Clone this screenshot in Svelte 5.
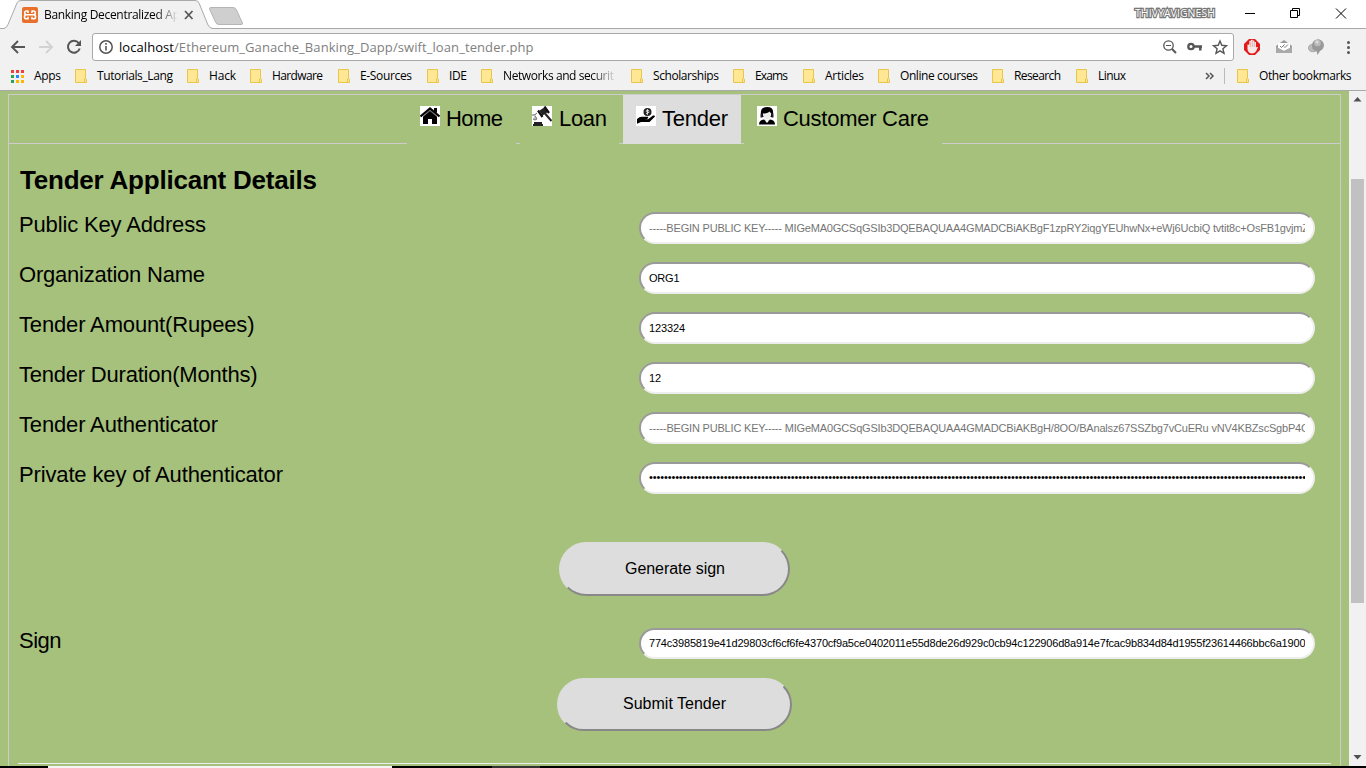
<script>
  const bookmarks = [
    { t: 'Tutorials_Lang', x: 75, tx: 97, w: 76 },
    { t: 'Hack', x: 187, tx: 209, w: 27 },
    { t: 'Hardware', x: 250, tx: 272, w: 51 },
    { t: 'E-Sources', x: 338, tx: 360, w: 52 },
    { t: 'IDE', x: 427, tx: 449, w: 18 },
    { t: 'Networks and securit', x: 481, tx: 503, w: 111, fade: true },
    { t: 'Scholarships', x: 631, tx: 653, w: 66 },
    { t: 'Exams', x: 733, tx: 755, w: 33 },
    { t: 'Articles', x: 803, tx: 825, w: 39 },
    { t: 'Online courses', x: 878, tx: 900, w: 78 },
    { t: 'Research', x: 992, tx: 1014, w: 47 },
    { t: 'Linux', x: 1076, tx: 1098, w: 28 }
  ];
  // each item's left margin is the space left after the previous label
  const items = bookmarks.map((b, i) => ({
    ...b,
    before: b.x - (i ? bookmarks[i - 1].tx + bookmarks[i - 1].w : 61),
    inner: b.tx - b.x - 12
  }));
  const tabs = [
    { t: 'Home', icon: 'home', w: 57, box: 109 },
    { t: 'Loan', icon: 'loan', w: 48, box: 99 },
    { t: 'Tender', icon: 'tender', w: 66, box: 118, on: true },
    { t: 'Customer Care', icon: 'care', w: 146, box: 198 }
  ];
  const rows = [
    { l: 'Public Key Address', w: 187, v: '-----BEGIN PUBLIC KEY----- MIGeMA0GCSqGSIb3DQEBAQUAA4GMADCBiAKBgF1zpRY2iqgYEUhwNx+eWj6UcbiQ tvtit8c+OsFB1gvjmZ', vw: 660, ph: true },
    { l: 'Organization Name', w: 186, v: 'ORG1', vw: 30.5 },
    { l: 'Tender Amount(Rupees)', w: 235.5, v: '123324', vw: 36 },
    { l: 'Tender Duration(Months)', w: 238.5, v: '12', vw: 12 },
    { l: 'Tender Authenticator', w: 199, v: '-----BEGIN PUBLIC KEY----- MIGeMA0GCSqGSIb3DQEBAQUAA4GMADCBiAKBgH/8OO/BAnalsz67SSZbg7vCuERu vNV4KBZscSgbP4C', vw: 660, ph: true },
    { l: 'Private key of Authenticator', w: 264, v: '•'.repeat(176), vw: 657, up: true }
  ];
  const sign = { l: 'Sign', w: 42.5, v: '774c3985819e41d29803cf6cf6fe4370cf9a5ce0402011e55d8de26d929c0cb94c122906d8a914e7fcac9b834d84d1955f23614466bbc6a1900', vw: 656.5, short: true };
</script>

{#snippet fit(t, w, size, h, base, cls)}
  <svg class="fit {cls}" width={w} height={h}><text x="0" y={base} font-size={size} textLength={w} xml:space="preserve">{t}</text></svg>
{/snippet}

{#snippet folder()}
  <svg class="folder" width="12" height="14" viewBox="0 0 12 14"><path d="M.5.5h10v9l1 .8v3.2H.5z" fill="#ffe793" stroke="#e9c54c"/><path d="M9.5 13V9.8h1" fill="none" stroke="#e9c54c"/></svg>
{/snippet}

{#snippet field(r)}
  <div class="row">
    <div class="label">{@render fit(r.l, r.w, 22, 28, 20, '')}</div>
    <div class="input" class:ph={r.ph} class:short={r.short}><div class="clip">{@render fit(r.v, r.vw, 11, 14, r.up ? 10 : 11, '')}</div></div>
  </div>
{/snippet}

<div class="screen">
  <div class="strip">
    <svg width="260" height="29" viewBox="0 0 260 29">
      <path d="M0 28.500h4Q7 28 8.500 24.500L17.500 3Q18.500 .5 21 .5H195Q198 .5 199 3L208 25Q209.500 28.500 213 28.500H260V29H0Z" fill="#f1f1f1"/>
      <path d="M0 28.500h4Q6.500 28 8 24.500L17 3Q18 .5 21 .5H195Q198 .5 199 3L208 25Q209.500 28.500 213 28.500H260" fill="none" stroke="#a9a9a9"/>
      <path d="M211 7.500h22q2.500 0 3.500 2.500l6 13q.5 1.500-1.500 1.500h-22q-2.500 0-3.500-2.500l-6-13q-.3-1.500 1.500-1.500z" fill="#cfcfcf" stroke="#b5b5b5"/>
      <rect x="22" y="7" width="16" height="16" rx="2" fill="#e8702a"/>
      <path d="M28 11h-1.500a1.600 1.600 0 0 0 0 3.700H33.500a1.900 1.900 0 0 1 0 4.100H32v-2M32 11h1.500a1.600 1.600 0 0 1 0 3.700H26.500a1.900 1.900 0 0 0 0 4.100H28v-2M28 10.500v2.500M32 10.500v2.500" fill="none" stroke="#fff" stroke-width="1.600"/>
      <path d="m185 11 7.500 8m0-8-7.500 8" stroke="#555" stroke-width="1.700"/>
    </svg>
    <div class="title">{@render fit('Banking Decentralized Ap', 136, 12, 18, 13, 'ui')}</div>
    <svg class="win" width="250" height="28" viewBox="1116 0 250 28">
      <text x="1135" y="17" font-size="10.500" textLength="80" fill="#fff" stroke="#777" stroke-width="2.400" paint-order="stroke">THIVYAVIGNESH</text>
      <g fill="none" stroke="#000"><path d="M1245 13.500h10M1290.500 10.500h7v7h-7zM1292.500 10V8.500h7v7H1298"/><path d="m1336 8.500 10 10m0-10-10 10"/></g>
    </svg>
  </div>

  <div class="toolbar">
    <svg width="92" height="33" viewBox="0 29 92 33" fill="none">
      <path d="M25 47H12m6-6-6 6 6 6" stroke="#555" stroke-width="1.900"/>
      <path d="M39 47h13m-6-6 6 6-6 6" stroke="#d2d2d2" stroke-width="1.900"/>
      <path d="M78.700 43a6 6 0 1 0 1 5.500" stroke="#555" stroke-width="2"/><path d="M81 40v6h-6z" fill="#555"/>
    </svg>
    <div class="omni">
      <svg width="26" height="26" viewBox="0 0 26 26"><circle cx="13" cy="13" r="6.200" fill="none" stroke="#555" stroke-width="1.500"/><path d="M13 12v4.500M13 9v1.700" stroke="#555" stroke-width="1.600"/></svg>
      {@render fit('localhost', 55, 13, 20, 15, 'ui')}{@render fit('/Ethereum_Ganache_Banking_Dapp/swift_loan_tender.php', 359.5, 13, 20, 15, 'ui gray')}
      <svg class="acts" width="72" height="26" viewBox="1161 34 72 26" fill="none" stroke="#555">
        <circle cx="1168.500" cy="45.500" r="4.700" stroke-width="1.300"/><path d="m1172 49 4 4" stroke-width="2"/><path d="M1166 45.500h5"/>
        <circle cx="1191" cy="46.500" r="2.700" stroke-width="2.300"/><path d="M1194 46.500h8m-1.700 0v4" stroke-width="2.500"/>
        <path d="m1220 41 1.800 4.300 4.700.4-3.600 3 1.100 4.600-4-2.500-4 2.500 1.100-4.600-3.600-3 4.700-.4z" stroke-width="1.400"/>
      </svg>
    </div>
    <svg width="132" height="33" viewBox="1234 29 132 33">
      <path d="M1249 39h6l5 5v6l-5 5h-6l-5-5v-6z" fill="#e01b1b"/><path d="M1247.500 44.500v5q1 4 4.500 4 3 0 4.500-3l1.500-3.500-2 .3v-5.300h-1.500l-.3-1.500h-1.500l-.4-.8h-1l-.4 1h-1.500l-.2 4z" fill="#f5e9e7"/><path d="M1250.300 42v5m2-6v6m2-5v5" stroke="#dc7770" stroke-width=".5"/>
      <path d="m1276 46 8-6 8 6v7h-16z" fill="#999"/><path d="M1278 43h12v5l-6 3-6-3z" fill="#fff"/><path d="m1276 47 8 4 8-4v6h-16z" fill="#aaa"/><path d="m1280 46 1.500 1.500 3-3m-.5 2 1 1 3-3" fill="none" stroke="#777"/>
      <ellipse cx="1313" cy="48" rx="4.500" ry="3.700" fill="#bbb" stroke="#aaa"/><path d="M1312 46a6 6 0 1 1 8 5l-2.500 4-1-4a5 5 0 0 1-4.500-5z" fill="#999"/><circle cx="1317.500" cy="43" r="3.300" fill="#bbb"/><circle cx="1317" cy="42" r="1.500" fill="#ddd"/>
      <g fill="#555"><circle cx="1348.500" cy="42.500" r="1.500"/><circle cx="1348.500" cy="47.500" r="1.500"/><circle cx="1348.500" cy="52.500" r="1.500"/></g>
    </svg>
  </div>

  <div class="marks">
    <svg class="apps" width="13" height="13" viewBox="0 0 13 13">
      <path d="M0 0h3v3H0zM5 0h3v3H5zM10 0h3v3h-3z" fill="#ee4036"/><path d="M0 5h3v3H0zM0 10h3v3H0z" fill="#2ba24c"/><path d="M5 5h3v3H5z" fill="#2684fc"/><path d="M10 5h3v3h-3zM5 10h3v3H5zM10 10h3v3h-3z" fill="#fbb605"/>
    </svg>
    {@render fit('Apps', 27, 12, 18, 13, 'ui')}
    {#each items as b}
      <div class="mark" class:fade={b.fade} style="margin-left:{b.before}px;gap:{b.inner}px">{@render folder()}{@render fit(b.t, b.w, 12, 18, 13, 'ui')}</div>
    {/each}
    <div class="other">
      <svg width="10" height="10" viewBox="0 0 10 10" fill="none" stroke="#555" stroke-width="1.500"><path d="m1 2 3 3-3 3m4-6 3 3-3 3"/></svg>
      <i></i>{@render folder()}{@render fit('Other bookmarks', 92.5, 12, 18, 13, 'ui')}
    </div>
  </div>

  <div class="view">
    <main>
      <nav>
        {#each tabs as tab}
          <div class="tab {tab.icon}" class:on={tab.on} style="width:{tab.box}px">
            <svg class="ico" width="20" height="20" viewBox="0 0 20 20">
              <rect width="20" height="20" fill="#fff"/>
              {#if tab.icon === 'home'}
                <path d="M3 10 10 4l7 6v8h-5v-5H8v5H3z"/><path d="m.5 10.500 9.500-8 9.500 8" fill="none" stroke="#000" stroke-width="2.200"/><path d="M14 2h3v5l-3-2z"/><path d="m2.500 11 7.500-6.300 7.500 6.300" fill="none" stroke="#bbb" stroke-width=".6"/>
              {:else if tab.icon === 'loan'}
                <path d="m7.500 4.500 5.500-3.500 3 5-5.500 3.500z" fill="#222"/><path d="m6 4.500 4.500 6.500M12.500 .5l4.500 6.500" stroke="#111" stroke-width="2.200"/><path d="m13 7.500 6.500 7.500" stroke="#222" stroke-width="2"/><path d="M2 16h8v2h1v2H1v-2h1z" fill="#222"/><path d="M0 9q3 1 5-2M1 13q2 2 4 0L3 9.500" stroke="#777" fill="#bbb"/>
              {:else if tab.icon === 'tender'}
                <circle cx="11.500" cy="6" r="4" fill="#222"/><path d="M13 4.500q-3-1-3 .5t2.500 1-2.500 1.700M11.500 3v6" stroke="#fff" fill="none" stroke-width=".7"/><path d="M1 13q3-3 6-2.200h5q1 1.500-1 2.200H8l4 .3 5-3.800q2-.5 2 1L13.500 16H5l-4 1.800z"/>
              {:else}
                <path d="M4 8q-1-7 6-7t6 7l-1 3H5z"/><path d="M5.800 7.500q5 0 6.500-2l2 2q-.5 6-4.300 6T5.800 7.500z" fill="#eee"/><path d="M3.500 7.500h2v4h-2zM14.500 7.500h2v4h-2z" fill="#222"/><path d="M2 18.500q0-4.500 5-5l3 2 3-2q5 .5 5 5z"/><path d="m7.500 14 2.500 3 2.500-3-2.500 1z" fill="#fff"/>
              {/if}
            </svg>
            {@render fit(tab.t, tab.w, 22, 28, 20, '')}
          </div>
        {/each}
      </nav>
      <section>
        <h2>{@render fit('Tender Applicant Details', 297, 26, 34, 25, 'bold')}</h2>
        {#each rows as r}{@render field(r)}{/each}
        <div class="button gen">{@render fit('Generate sign', 100, 16, 20, 15, '')}</div>
        {@render field(sign)}
        <div class="button submit">{@render fit('Submit Tender', 103, 16, 20, 14, '')}</div>
        <hr />
      </section>
    </main>
    <div class="scroll">
      <svg width="17" height="17"><path d="M4.500 10.500 8.500 6l4 4.500z" fill="#505050"/></svg>
      <div class="thumb"></div>
      <svg width="17" height="17"><path d="M4.500 6 8.500 10.500l4-4.500z" fill="#505050"/></svg>
    </div>
  </div>
  <div class="taskbar"></div>
</div>

<style>
  :global(body) { margin: 0; overflow: hidden; }
  .screen { width: 1366px; height: 768px; display: flex; flex-direction: column; background: #fff; font-family: "Liberation Sans", Arial, sans-serif; overflow: hidden; }
  svg { display: block; flex: none; }
  .fit { overflow: visible; }
  .ui text, .win text { font-family: "Open Sans", "Noto Sans", sans-serif; }
  .gray { fill: #808080; }
  .bold { font-weight: bold; }
  .strip { height: 29px; display: flex; flex: none; background: linear-gradient(#a9a9a9, #a9a9a9) 0 28px / 100% 1px no-repeat; }
  .title { margin: 6px 0 0 -216px; height: 18px; width: 134px; overflow: hidden; -webkit-mask-image: linear-gradient(90deg, #000 112px, transparent 134px); mask-image: linear-gradient(90deg, #000 112px, transparent 134px); }
  .win { margin-left: auto; }
  .toolbar { height: 33px; flex: none; display: flex; background: #f1f1f1; }
  .omni { box-sizing: border-box; width: 1142px; height: 28px; margin-top: 4px; border: 1px solid #a9a9a9; border-radius: 3px; background: #fff; display: flex; align-items: center; }
  .acts { margin-left: auto; }
  .marks { height: 29px; flex: none; box-sizing: border-box; border-bottom: 1px solid #a9a9a9; background: #f1f1f1; display: flex; align-items: center; }
  .apps { margin: 0 10px 0 11px; }
  .mark { display: flex; align-items: center; }
  .fade { -webkit-mask-image: linear-gradient(90deg, #000 110px, transparent 136px); mask-image: linear-gradient(90deg, #000 110px, transparent 136px); }
  .other { margin-left: auto; margin-right: 15px; display: flex; align-items: center; }
  .other i { width: 1px; height: 16px; background: #bbb; margin: 0 12px 0 9px; }
  .other .folder { margin-right: 10px; }
  .view { height: 675px; flex: none; display: flex; background: #a6c17b; }
  main { box-sizing: border-box; width: 1333px; margin: 3px 8px 0; border: 1px solid #ccc; border-bottom: 0; }
  nav { height: 48px; border-bottom: 1px solid #ccc; padding-left: 398px; display: flex; gap: 4px; }
  .tab { box-sizing: border-box; height: 49px; background: #a6c17b; padding: 11px 0 0 13px; display: flex; gap: 6px; }
  .tab.loan { padding-left: 12px; gap: 6.500px; }
  .tab.on { background: #ddd; margin-right: -1px; }
  section { padding: 18px 9px 0 10px; }
  h2 { margin: 2px 0 0 1px; height: 48px; }
  .row { display: flex; height: 50px; }
  .label { width: 620px; }
  .label .fit { margin-left: -.5px; }
  .input { box-sizing: border-box; width: 676px; height: 32px; border: 2px solid; border-color: #9a9a9a #eee #eee #9a9a9a; border-radius: 16px; background: #fff; display: flex; align-items: center; padding: 0 8px; }
  .input.short { height: 31px; padding-bottom: 1px; }
  .clip { width: 656.500px; height: 14px; overflow: hidden; }
  .ph { fill: #757575; }
  .button { box-sizing: border-box; border: 2px solid; border-color: #ddd #888 #888 #ddd; background: #ddd; border-radius: 27px; display: flex; align-items: center; justify-content: center; }
  .gen { width: 231px; height: 54px; margin: 30px 0 32px 540px; }
  .submit { width: 235px; height: 53px; margin: 0 0 0 538px; }
  hr { height: 1px; border: 0; background: #eee; margin: 32px 0 0 -1px; }
  .scroll { width: 17px; background: #f1f1f1; display: flex; flex-direction: column; }
  .thumb { width: 13px; height: 424px; margin: 71px 2px auto; background: #c1c1c1; }
  .taskbar { height: 2px; background: linear-gradient(90deg, #000 48px, #f4f4f4 48px 392px, #000 392px 492px, #333 492px 540px, #000 540px); }
</style>
